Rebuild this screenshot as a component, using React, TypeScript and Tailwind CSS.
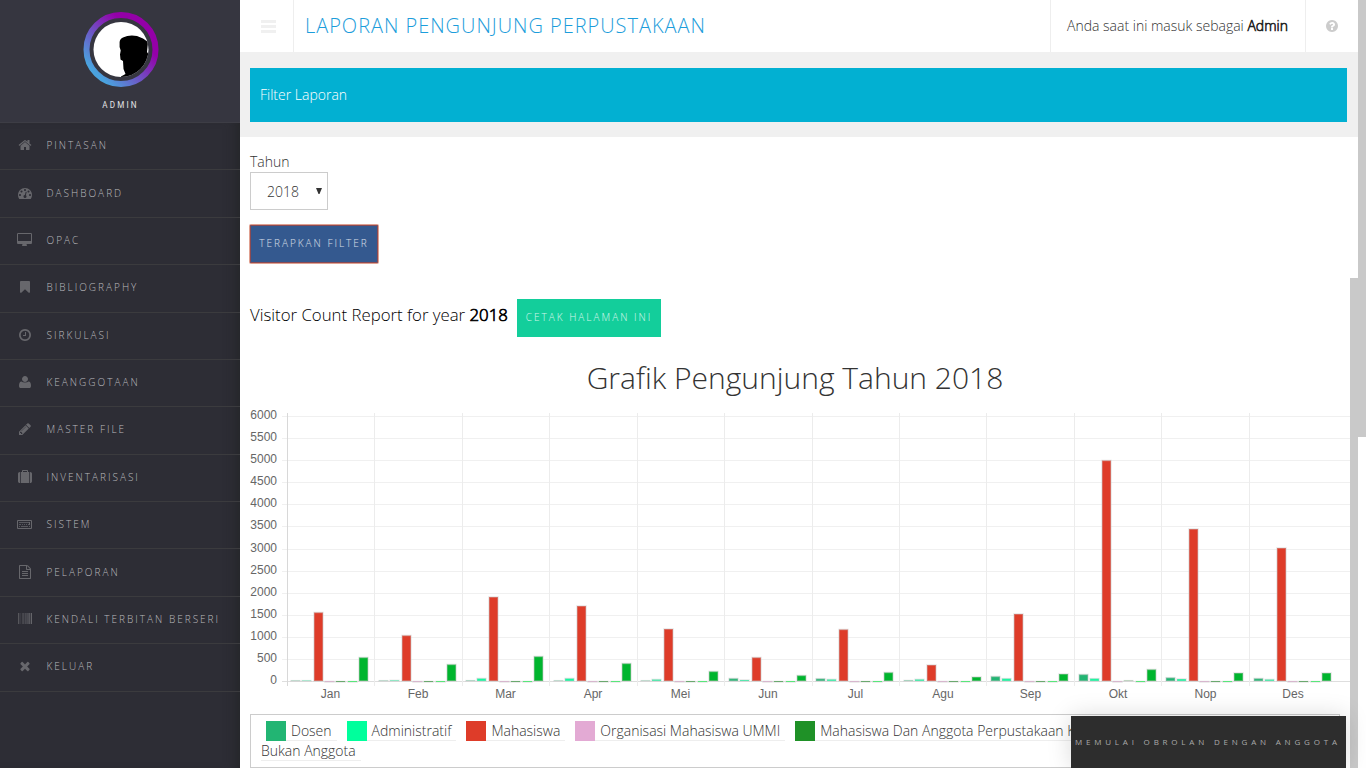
import React from 'react';

type Icon = { vb: string; w: number; d: string };

const HOME: Icon = { vb: '0 0 1792 1792', w: 14, d: 'M1472 992v480q0 26-19 45t-45 19h-384v-384h-256v384h-384q-26 0-45-19t-19-45v-480q0-1 .5-3t.5-3l575-474 575 474q1 2 1 6zm223-69l-62 74q-8 9-21 11h-3q-13 0-21-7l-692-577-692 577q-12 8-24 7-13-2-21-11l-62-74q-8-10-7-23.5t11-21.5l719-599q32-26 76-26t76 26l244 204v-195q0-14 9-23t23-9h192q14 0 23 9t9 23v408l219 182q10 8 11 21.5t-7 23.5z' };
const GAUGE: Icon = { vb: '0 0 1792 1792', w: 14, d: 'M384 1152q0-53-37.5-90.5t-90.5-37.5-90.5 37.5-37.5 90.5 37.5 90.5 90.5 37.5 90.5-37.5 37.5-90.5zm192-448q0-53-37.5-90.5t-90.5-37.5-90.5 37.5-37.5 90.5 37.5 90.5 90.5 37.5 90.5-37.5 37.5-90.5zm428 481l101-382q6-26-7.5-48.5t-38.5-29.5-48 6.5-30 39.5l-101 382q-60 5-107 43.5t-63 98.5q-20 77 20 146t117 89 146-20 89-117q16-60-6-117t-72-91zm660-33q0-53-37.5-90.5t-90.5-37.5-90.5 37.5-37.5 90.5 37.5 90.5 90.5 37.5 90.5-37.5 37.5-90.5zm-640-640q0-53-37.5-90.5t-90.5-37.5-90.5 37.5-37.5 90.5 37.5 90.5 90.5 37.5 90.5-37.5 37.5-90.5zm448 192q0-53-37.5-90.5t-90.5-37.5-90.5 37.5-37.5 90.5 37.5 90.5 90.5 37.5 90.5-37.5 37.5-90.5zm320 448q0 261-141 483-19 29-54 29h-1402q-35 0-54-29-141-221-141-483 0-182 71-348t191-286 286-191 348-71 348 71 286 191 191 286 71 348z' };
const DESKTOP: Icon = { vb: '0 0 1920 1792', w: 15, d: 'M1792 992v-832q0-13-9.5-22.5t-22.5-9.5h-1600q-13 0-22.5 9.5t-9.5 22.5v832q0 13 9.5 22.5t22.5 9.5h1600q13 0 22.5-9.5t9.5-22.5zm128-832v1088q0 66-47 113t-113 47h-544q0 37 16 77.5t32 71 16 43.5q0 26-19 45t-45 19h-512q-26 0-45-19t-19-45q0-14 16-44t32-70 16-78h-544q-66 0-113-47t-47-113v-1088q0-66 47-113t113-47h1600q66 0 113 47t47 113z' };
const BOOKMARK: Icon = { vb: '0 0 1792 1792', w: 14, d: 'M1420 128q23 0 44 9 33 13 52.5 41t19.5 62v1289q0 34-19.5 62t-52.5 41q-19 8-44 8-48 0-83-32l-441-424-441 424q-36 33-83 33-23 0-44-9-33-13-52.5-41t-19.5-62v-1289q0-34 19.5-62t52.5-41q21-9 44-9h1048z' };
const CLOCK: Icon = { vb: '0 0 1792 1792', w: 14, d: 'M1024 544v448q0 14-9 23t-23 9h-320q-14 0-23-9t-9-23v-64q0-14 9-23t23-9h224v-352q0-14 9-23t23-9h64q14 0 23 9t9 23zm416 352q0-148-73-273t-198-198-273-73-273 73-198 198-73 273 73 273 198 198 273 73 273-73 198-198 73-273zm224 0q0 209-103 385.5t-279.5 279.5-385.5 103-385.5-103-279.5-279.5-103-385.5 103-385.5 279.5-279.5 385.5-103 385.5 103 279.5 279.5 103 385.5z' };
const USER: Icon = { vb: '0 0 1792 1792', w: 14, d: 'M1664 1399q0 109-62.5 187t-150.5 78h-1110q-88 0-150.5-78t-62.5-187q0-85 8.5-160.5t31.5-152 58.5-131 94-89 134.5-34.5q131 128 441 128t441-128q76 0 134.5 34.5t94 89 58.5 131 31.5 152 8.5 160.5zm-384-887q0 159-112.5 271.5t-271.5 112.5-271.5-112.5-112.5-271.5 112.5-271.5 271.5-112.5 271.500 112.5 112.5 271.5z' };
const PENCIL: Icon = { vb: '0 0 1792 1792', w: 14, d: 'M491 1536l91-91-235-235-91 91v107h128v128h107zm523-928q0-22-22-22-10 0-17 7l-542 542q-7 7-7 17 0 22 22 22 10 0 17-7l542-542q7-7 7-17zm-54-192l416 416-832 832h-416v-416zm683 96q0 53-37 90l-166 166-416-416 166-165q36-38 90-38 53 0 91 38l235 234q37 39 37 91z' };
const SUITCASE: Icon = { vb: '0 0 1792 1792', w: 14, d: 'M640 256h512v-128h-512v128zm-352 0v1408h-64q-92 0-158-66t-66-158v-960q0-92 66-158t158-66h64zm1120 0v1408h-1024v-1408h128v-160q0-40 28-68t68-28h576q40 0 68 28t28 68v160h128zm384 224v960q0 92-66 158t-158 66h-64v-1408h64q92 0 158 66t66 158z' };
const KEYBOARD: Icon = { vb: '0 0 1920 1792', w: 15, d: 'M128 384h1664q128 0 128 128v896q0 128-128 128h-1664q-128 0-128-128v-896q0-128 128-128zm0 128v896h1664v-896zM256 640h1280v96h-1280zM1536 640h128v384h-256v-96h128zM256 928h256v96h-256zM640 928h128v96h-128zM896 928h128v96h-128zM1152 928h128v96h-128zM256 1184h128v96h-128zM512 1184h896v96h-896zM1536 1184h128v96h-128z' };
const FILE: Icon = { vb: '0 0 1792 1792', w: 14, d: 'M1596 380q28 28 48 76t20 88v1152q0 40-28 68t-68 28h-1344q-40 0-68-28t-28-68v-1600q0-40 28-68t68-28h896q40 0 88 20t76 48zm-444-244v376h376q-10-29-22-41l-313-313q-12-12-41-22zm384 1528v-1024h-416q-40 0-68-28t-28-68v-416h-768v1536h1280zm-1024-864q0-14 9-23t23-9h704q14 0 23 9t9 23v64q0 14-9 23t-23 9h-704q-14 0-23-9t-9-23v-64zm736 224q14 0 23 9t9 23v64q0 14-9 23t-23 9h-704q-14 0-23-9t-9-23v-64q0-14 9-23t23-9h704zm0 256q14 0 23 9t9 23v64q0 14-9 23t-23 9h-704q-14 0-23-9t-9-23v-64q0-14 9-23t23-9h704z' };
const BARCODE: Icon = { vb: '0 0 1792 1792', w: 14, d: 'M0 128h63v1408h-63zM94 128h31v1408h-31zM189 128h31v1408h-31zM346 128h31v1408h-31zM503 128h62v1408h-62zM660 128h31v1408h-31zM723 128h31v1408h-31zM786 128h31v1408h-31zM943 128h63v1408h-63zM1100 128h63v1408h-63zM1226 128h63v1408h-63zM1351 128h63v1408h-63zM1446 128h94v1408h-94zM1572 128h31v1408h-31zM1666 128h126v1408h-126z' };
const TIMES: Icon = { vb: '0 0 1792 1792', w: 14, d: 'M1490 1322q0 40-28 68l-136 136q-28 28-68 28t-68-28l-294-294-294 294q-28 28-68 28t-68-28l-136-136q-28-28-28-68t28-68l294-294-294-294q-28-28-28-68t28-68l136-136q28-28 68-28t68 28l294 294 294-294q28-28 68-28t68 28l136 136q28 28 28 68t-28 68l-294 294 294 294q28 28 28 68z' };
const HELP: Icon = { vb: '0 0 1792 1792', w: 14, d: 'M1024 1376v-192q0-14-9-23t-23-9h-192q-14 0-23 9t-9 23v192q0 14 9 23t23 9h192q14 0 23-9t9-23zm256-672q0-88-55.5-163t-138.5-116-170-41q-243 0-371 213-15 24 8 42l132 100q7 6 19 6 16 0 25-12 53-68 86-92 34-24 86-24 48 0 85.5 26t37.5 59q0 38-20 61t-68 45q-63 28-115.5 86.5t-52.5 125.5v36q0 14 9 23t23 9h192q14 0 23-9t9-23q0-19 21.5-49.5t54.5-49.5q32-18 49-28.5t46-35 44.5-48 28-60.5 12.5-81zm384 192q0 209-103 385.5t-279.5 279.5-385.5 103-385.5-103-279.5-279.5-103-385.5 103-385.5 279.5-279.5 385.5-103 385.5 103 279.5 279.5 103 385.5z' };

function Glyph({ icon, className = '' }: { icon: Icon; className?: string }) {
  return (
    <svg width={icon.w} height={14} viewBox={icon.vb} fill="currentColor" fillRule="evenodd" className={className}>
      <path d={icon.d} />
    </svg>
  );
}

const MENU: { label: string; icon: Icon }[] = [
  { label: 'PINTASAN', icon: HOME },
  { label: 'DASHBOARD', icon: GAUGE },
  { label: 'OPAC', icon: DESKTOP },
  { label: 'BIBLIOGRAPHY', icon: BOOKMARK },
  { label: 'SIRKULASI', icon: CLOCK },
  { label: 'KEANGGOTAAN', icon: USER },
  { label: 'MASTER FILE', icon: PENCIL },
  { label: 'INVENTARISASI', icon: SUITCASE },
  { label: 'SISTEM', icon: KEYBOARD },
  { label: 'PELAPORAN', icon: FILE },
  { label: 'KENDALI TERBITAN BERSERI', icon: BARCODE },
  { label: 'KELUAR', icon: TIMES },
];

function Sidebar() {
  return (
    <aside className="flex w-[240px] shrink-0 flex-col bg-[#2d2d35]">
      <div className="flex h-[122px] shrink-0 flex-col items-center bg-[#363640] pt-3">
        <svg width="76" height="76" viewBox="0 0 76 76" className="ml-px shrink-0">
          <defs>
            <linearGradient id="ring" x1="0.15" y1="0.85" x2="0.85" y2="0.15">
              <stop offset="0" stopColor="#4aa3df" />
              <stop offset="0.8" stopColor="#9400a8" />
              <stop offset="1" stopColor="#9400a8" />
            </linearGradient>
            <clipPath id="face">
              <circle cx="38" cy="37.5" r="27.5" />
            </clipPath>
          </defs>
          <circle cx="38" cy="37.5" r="34.5" fill="none" stroke="url(#ring)" strokeWidth="6" />
          <circle cx="38" cy="37.5" r="27.5" fill="#fff" />
          <path clipPath="url(#face)" d="M38 76V64.500L42.500 62L40.500 57L40 49L37.500 47.500L37 42.500L37.700 38.500L36.600 35V30Q37 26.500 40 25.500Q46 22.500 54 24L60 26.500L65 30L64 40L66 43V76Z" fill="#000" />
        </svg>
        <div className="mt-[11px] font-['Roboto'] text-[9.500px] leading-[12px] font-normal tracking-[2.600px] text-[#e4e4e6]">
          <span className="inline-block scale-x-85 pl-[1px]">ADMIN</span>
        </div>
      </div>
      <nav className="flex flex-1 flex-col border-t border-[#3d3d45] shadow-[inset_-12px_0_12px_-8px_rgba(32,34,34,0.6)]">
        {MENU.map((m) => (
          <div key={m.label} className="flex h-[47.375px] shrink-0 items-center border-b border-[#3b3b3e]">
            <span className="flex w-[46.5px] items-center justify-center pb-[2px] pl-[3px] text-[#67676c]">
              <Glyph icon={m.icon} />
            </span>
            <span className="pb-[1px] text-[10px] tracking-[2px] text-[#b9b9bd]">{m.label}</span>
          </div>
        ))}
      </nav>
    </aside>
  );
}

const MONTHS = ['Jan', 'Feb', 'Mar', 'Apr', 'Mei', 'Jun', 'Jul', 'Agu', 'Sep', 'Okt', 'Nop', 'Des'];
const COLORS = ['#22b573', '#00ff9c', '#de3c29', '#e3aad4', '#1f9127', '#00ff3c', '#00b52e'];
const BAR_X = [0, 11, 23, 34, 45, 57, 68];
const HEIGHTS: number[][] = [
  [0.3, 0.4, 68.5, 0, 0, 0, 23.5],
  [0.3, 0.6, 45.5, 0, 0, 0, 16.5],
  [0.4, 2.5, 84, 0, 0, 0, 24.5],
  [0.3, 2.5, 75, 0, 0, 0, 17.5],
  [0.3, 1.5, 52, 0, 0, 0, 9.5],
  [2.5, 1, 23.5, 0, 0, 0, 5.5],
  [2.3, 1.6, 51.5, 0, 0, 0, 8.5],
  [0.5, 1.6, 16, 0, 0, 0, 4],
  [4.5, 2.4, 67, 0, 0, 0, 7],
  [6.5, 2.4, 220.5, 0, 0.3, 0, 11.5],
  [3.3, 2, 152, 0, 0, 0, 8],
  [2.5, 1.5, 133, 0, 0, 0, 8],
];
const GRID_Y = [416, 438, 460, 482, 504, 526, 549, 571, 593, 615, 637, 659, 681];

function Chart() {
  return (
    <svg width="1100" height="300" viewBox="250 408 1100 300" className="block shrink-0 font-['Liberation_Sans',sans-serif] text-[12px] font-normal" fill="#666">
      {GRID_Y.map((y, i) => (
        <g key={y}>
          <rect x="282" y={y} width="1068" height="1" fill={i === 12 ? '#dedede' : '#f0f0f0'} />
          <text x="277" y={y + 3} textAnchor="end">{6000 - i * 500}</text>
        </g>
      ))}
      {MONTHS.map((m, i) => (
        <rect key={m} x={Math.floor(287.45 + 87.43 * i)} y="413" width="1" height="273" fill={i === 0 ? '#d8d8d8' : '#ececec'} />
      ))}
      {MONTHS.map((m, i) => {
        const x0 = Math.round(291 + 87.5 * i);
        return (
          <g key={m}>
            {HEIGHTS[i].map((h, k) => {
              const flat = h < 0.1;
              const top = flat ? 681 : 681 - h;
              return (
                <g key={k}>
                  <rect x={x0 + BAR_X[k]} y={top} width="9" height={flat ? 1 : h} fill={COLORS[k]} />
                  <rect x={x0 + BAR_X[k]} y={flat ? 681.5 : top} width="9" height={flat ? 0.5 : h} fill="none" stroke="#c8c8c8" strokeOpacity="0.45" strokeWidth="1.5" />
                </g>
              );
            })}
            <text x={330.5 + 87.5 * i} y="698" textAnchor="middle">{m}</text>
          </g>
        );
      })}
    </svg>
  );
}

const LEGEND: { label: string; swatch: string }[] = [
  { label: 'Dosen', swatch: 'bg-[#22b573]' },
  { label: 'Administratif', swatch: 'bg-[#00ff9c]' },
  { label: 'Mahasiswa', swatch: 'bg-[#de3c29]' },
  { label: 'Organisasi Mahasiswa UMMI', swatch: 'bg-[#e3aad4]' },
  { label: 'Mahasiswa Dan Anggota Perpustakaan K', swatch: 'bg-[#1f9127]' },
];

export default function App() {
  return (
    <div className="relative flex h-[768px] w-[1366px] overflow-hidden bg-white font-['Open_Sans',sans-serif] text-[14px] font-light text-[#333]">
      <Sidebar />
      <main className="flex w-[1118px] shrink-0 flex-col">
        <header className="flex h-[52px] shrink-0 items-stretch">
          <div className="flex w-[54px] flex-col justify-center gap-[2px] border-r border-[#eee] pl-[21px] pt-px">
            <span className="h-[3px] w-[15px] bg-[#f0f0f0]" />
            <span className="h-[3px] w-[15px] bg-[#f0f0f0]" />
            <span className="h-[3px] w-[15px] bg-[#f0f0f0]" />
          </div>
          <h1 className="flex-1 pl-[11px] text-[20px] leading-[52px] tracking-[0.970px] text-[#1c9ddb]">LAPORAN PENGUNJUNG PERPUSTAKAAN</h1>
          <div className="w-[256px] border-x border-[#eee] pl-4 leading-[52px] whitespace-nowrap">
            Anda saat ini masuk sebagai <span className="[-webkit-text-stroke:0.6px_#222]">Admin</span>
          </div>
          <div className="flex w-[52px] items-center justify-center text-[#ccc]">
            <Glyph icon={HELP} />
          </div>
        </header>
        <div className="h-[85px] shrink-0 bg-[#f0f0f0] pt-4 pr-[11px] pl-[10px]">
          <div className="h-[54px] bg-[#02b0d2] pl-[10px] leading-[54px] text-white">Filter Laporan</div>
        </div>
        <section className="flex min-h-0 flex-1">
          <div className="flex w-[1110px] shrink-0 flex-col items-start pl-[10px]">
            <label className="mt-[15px] leading-5">Tahun</label>
            <div className="flex h-[38px] w-[78px] items-center justify-between border border-[#ccc] pt-px pr-[5px] pl-4">
              <span>2018</span>
              <svg width="6" height="6" viewBox="0 0 6 6" className="mb-[2px]"><path d="M0 0h6L3.5 6h-1z" fill="#333" /></svg>
            </div>
            <button className="mt-[15px] h-[38px] w-[128px] rounded-[1px] bg-[#34598f] pb-px text-[10px] tracking-[2px] text-white/80 shadow-[0_0_0_1px_#e0a090] outline outline-1 -outline-offset-1 outline-[#8b4a52]">TERAPKAN FILTER</button>
            <div className="mt-[36px] flex h-[38px] items-start">
              <div className="w-[267px] text-[16.800px] leading-[32px] text-black">
                Visitor Count Report for year <span className="[-webkit-text-stroke:0.7px_#000]">2018</span>
              </div>
              <button className="h-[38px] w-[144px] bg-[#13ce9b] pb-px text-[10px] tracking-[2px] text-white/80">CETAK HALAMAN INI</button>
            </div>
            <h2 className="mt-[20px] w-[1090px] text-center text-[30px] leading-[42px]">Grafik Pengunjung Tahun 2018</h2>
            <div className="mt-[9px] h-[306px] shrink-0"><Chart /></div>
            <div className="flex h-[54px] w-[1090px] shrink-0 flex-col overflow-hidden border border-[#ccc] pt-[6px] pl-[10px]">
              <div className="flex h-5 shrink-0 gap-[10px] pl-[5px] whitespace-nowrap">
                {LEGEND.map((l) => (
                  <div key={l.label} className="flex h-5 shrink-0 gap-[5px] border-b border-[#eee] pr-[5px]">
                    <span className={'h-5 w-5 ' + l.swatch} />
                    <span className="leading-5">{l.label}</span>
                  </div>
                ))}
              </div>
              <div className="h-5 w-[100px] shrink-0 border-b border-[#eee] leading-5">Bukan Anggota</div>
            </div>
          </div>
          <div className="flex w-2 flex-col pt-[141px]"><div className="flex-1 bg-[#c9c9c9]" /></div>
        </section>
      </main>
      <div className="w-2 shrink-0"><div className="h-[437px] bg-[#c9c9c9]" /></div>
      <div className="absolute top-[716px] left-[1071px] h-[52px] w-[275px] bg-[#2d2d2d] pl-1 text-[8px] leading-[52px] font-normal tracking-[3.800px] whitespace-nowrap text-[#aaa] shadow-[0_0_24px_rgba(0,0,0,0.15)]">MEMULAI OBROLAN DENGAN ANGGOTA</div>
    </div>
  );
}
